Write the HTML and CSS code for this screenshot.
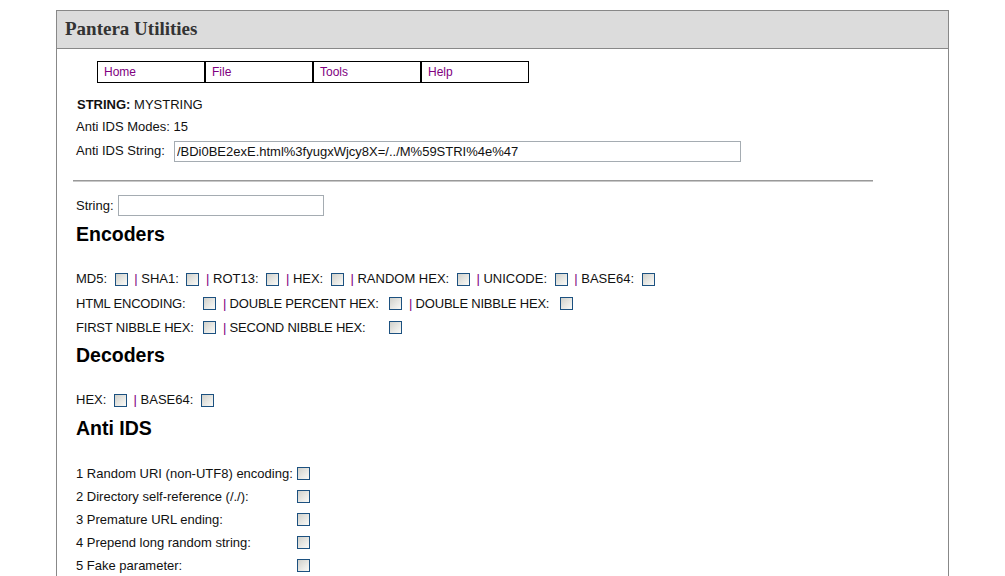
FILE: index.html
```html
<!DOCTYPE html>
<html lang="en">
<head>
  <meta charset="UTF-8">
  <title>Pantera Utilities</title>
  <link rel="stylesheet" href="styles.css">
</head>
<body>
  <div class="page">
    <div class="masthead">
      <h1>Pantera Utilities</h1>
    </div>

    <div class="content">
      <ul class="menu">
        <li><a href="#">Home</a></li>
        <li><a href="#">File</a></li>
        <li><a href="#">Tools</a></li>
        <li><a href="#">Help</a></li>
      </ul>

      <div class="status">
        <p class="status-line"><b>STRING:</b> MYSTRING</p>
        <p>Anti IDS Modes: 15</p>
        <p class="field">Anti IDS String: <input type="text" class="text-long" value="/BDi0BE2exE.html%3fyugxWjcy8X=/../M%59STRI%4e%47"></p>
      </div>

      <hr>

      <form>
        <p class="field">String: <input type="text" class="text-short"></p>

        <h2>Encoders</h2>
        <p class="opts">MD5: <input type="checkbox"> <span class="sep">|</span> SHA1: <input type="checkbox"> <span class="sep">|</span> ROT13: <input type="checkbox"> <span class="sep">|</span> HEX: <input type="checkbox"> <span class="sep">|</span> RANDOM HEX: <input type="checkbox"> <span class="sep">|</span> UNICODE: <input type="checkbox"> <span class="sep">|</span> BASE64: <input type="checkbox"></p>
        <div class="opt-grid">
          <span>HTML ENCODING:</span><input type="checkbox">
          <span class="next"><span class="sep">|</span> DOUBLE PERCENT HEX:</span><input type="checkbox">
          <span class="next"><span class="sep">|</span> DOUBLE NIBBLE HEX:</span><input type="checkbox">
          <span>FIRST NIBBLE HEX:</span><input type="checkbox">
          <span class="next"><span class="sep">|</span> SECOND NIBBLE HEX:</span><input type="checkbox">
        </div>

        <h2>Decoders</h2>
        <p class="opts">HEX: <input type="checkbox"> <span class="sep">|</span> BASE64: <input type="checkbox"></p>

        <h2 class="ids-title">Anti IDS</h2>
        <div class="ids-grid">
          <span>1 Random URI (non-UTF8) encoding:</span><input type="checkbox">
          <span>2 Directory self-reference (/./):</span><input type="checkbox">
          <span>3 Premature URL ending:</span><input type="checkbox">
          <span>4 Prepend long random string:</span><input type="checkbox">
          <span>5 Fake parameter:</span><input type="checkbox">
        </div>
      </form>
    </div>
  </div>
</body>
</html>
```

FILE: styles.css
```css
/* base */
* {
  box-sizing: border-box;
}

body {
  margin: 0;
  background: #fff;
  color: #111;
  font-family: "Liberation Sans", Arial, sans-serif;
  font-size: 13px;
}

p {
  margin: 0;
}

/* outer frame */
.page {
  width: 893px;
  margin: 10px auto 0;
  border: 1px solid #888;
}

.masthead {
  background: #dcdcdc;
  border-bottom: 1px solid #888;
  height: 38px;
  padding: 0 8px;
}

.masthead h1 {
  margin: 0;
  font-family: "Liberation Serif", "Times New Roman", serif;
  font-size: 19px;
  line-height: 35px;
  color: #333;
}

.content {
  padding: 12px 19px 24px;
}

/* top menu */
.menu {
  display: flex;
  list-style: none;
  margin: 0 0 0 21px;
  padding: 0;
}

.menu li {
  width: 108px;
  height: 22px;
  border: 1px solid #000;
  padding-left: 6px;
  line-height: 20px;
  font-size: 12px;
}

.menu a {
  color: #800080;
  text-decoration: none;
}

/* current string info */
.status {
  margin-top: 11px;
}

.status p {
  line-height: 22px;
}

.status .status-line {
  padding-left: 1px;
}

.field {
  display: flex;
  align-items: center;
}

.status .field {
  height: 26px;
}

form .field {
  height: 25px;
}

.field input {
  height: 21px;
  border: 1px solid #a5acb2;
  padding: 0 2px;
  font-family: inherit;
  font-size: 13px;
  color: #111;
}

.text-long {
  width: 567px;
  margin-left: 9px;
}

.text-short {
  width: 206px;
  margin-left: 4px;
}

hr {
  width: 800px;
  height: 0;
  margin: 16px 0 11px -3px;
  border: 0;
  border-top: 1px solid #999;
  border-bottom: 1px solid #c8c8c8;
}

h2 {
  margin: 4px 0 21px;
  font-size: 19.5px;
  line-height: 24px;
  color: #000;
}

h2.ids-title {
  margin-bottom: 22px;
}

/* checkboxes */
input[type="checkbox"] {
  appearance: none;
  -webkit-appearance: none;
  width: 13px;
  height: 13px;
  margin: 0 3px 0 4px;
  border: 1px solid #1c5180;
  background: linear-gradient(135deg, #d0d0ca 0%, #e8e8e4 55%, #fafaf7 100%);
  vertical-align: middle;
}

.sep {
  color: #800080;
}

.opts {
  line-height: 24px;
}

.opt-grid {
  display: grid;
  grid-template-columns: 123px 20px 166px 20px 151px 20px;
  grid-auto-rows: 24px;
  align-items: center;
}

.opt-grid > span {
  letter-spacing: -0.2px;
  white-space: nowrap;
}

.opt-grid .next {
  padding-left: 4px;
}

.ids-grid {
  display: grid;
  grid-template-columns: max-content 20px;
  grid-auto-rows: 23px;
  align-items: center;
  justify-content: start;
}
```
